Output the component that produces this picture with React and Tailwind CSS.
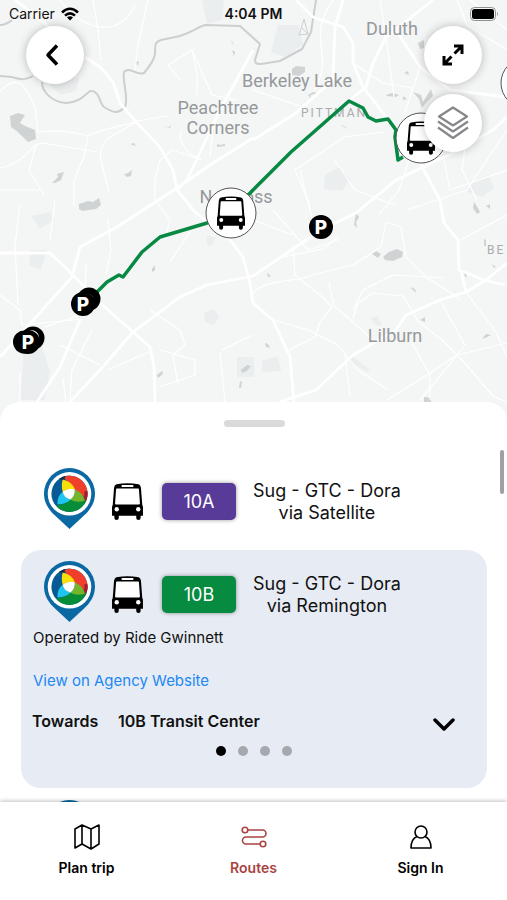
const WATER = [
    'M10 116l8-3 7 2-5 8 5 3 10 4 1 9-8 3-10-10-7-5z',
    'M52 183l6-6-1-3 7-2-3 8-6 3z',
    'M124 174l4-1 4-3-1 6-4 1z',
    'M130 144l4-1 2 3z',
    'M164 126l4 2 3-3-1 3-5-1z',
    'M217 144l3 1 5-1v2l-8 1z',
    'M231 39l1 4 2 3M232 50l2 6 1-4z',
    'M135 61l4 1-1 4z',
    'M79 204l9-3 5 1 6-4 2 7-5 4-14 2-3-2z',
    'M152 269l3-4v5l-3 2z',
    'M157 375l5-4 1 3-5 4z',
    'M241 370l6-5 4 1-4 5-5 2zM239 388l1-7 2 1-1 6z',
    'M292 69l4-3 9 1v5l-6 4-7-1z',
    'M308 95l5-3 4 1-6 2-1 3z',
    'M340 125l4 1 4 3-2-1z',
    'M386 95l6-2 7 2-3 2-9-1zM403 96l4 3-4 1z',
    'M413 92l8 3 2 7 8-13 2 7-6 6-5 6-3-9z',
    'M404 73l4-2 1 4z',
    'M418 43l6-3v8l-4 1z',
    'M355 219l1-6 3 4-3 5 1 6-3-3z',
    'M372 254l4-3 5 3-3 4zM383 257l6-5 8-3 6 3-1 5-9 4-8-1z',
    'M474 202l4 6 2 4-3 2-4-6zM486 206l4-2v5z',
    'M484 239l2 1v6h-2zM492 264l4 3-2 1z',
    'M410 287l5 2 1 4z',
    'M420 320l5-3v5zM482 339l4-5 5 1-4 2z',
    'M461 273l6-1-1 6-2-4z',
    'M265 343l3 1 2 4-4-1zM267 273l4 3-3 1z',
    'M424 397l7 1v4h-7z',
];

const PARKS = [
    'M31 250h16l-6 20-12-5z',
    'M202 0h22l-2 20-15 4z',
    'M278 25h20l5 20-18 12-14-5z',
    'M24 347h18l8 25-6 28H20z',
    'M237 357h17v20h-17z',
    'M204 313l10-4 5 8-6 8-8-3z',
    'M262 361l16-5 3 15-19 1z',
    'M352 356l18 14-3 2-18-11z',
    'M370 318l8-2 4 9-5 1z',
    'M325 175l15-8 10 12-8 12-18-2z',
    'M470 182l18-7 6 13-12 9-14-5z',
    'M207 235l9 3-5 8-4-1z',
    'M45 80l15 15 16-4 3-13z',
    'M31 216l20-4 3 8-14 9z',
];

const MAIN_ROADS = [
    'M85 57l15 10 13 15 7 21 17 20 23 24 13 23 4 20 18 22 35 28 13 17 7 26 3 20 20 17 17 37 4 46',
    'M70 402l30-32 33-38 47-35 27-12 46-9 37-25 31-21 35-17 40-33 57-27 40-23 14-13',
    'M253 50l-33 60-33 70-10 10',
    'M253 138l-40 25-36 25-20 13-40 26-37 20-8 30-72 80',
    'M0 253h50l20 19 30 31 33 29 17 15 4 20 1 35',
    'M80 320l-20 47-23 35',
    'M296 0l17 17 30 10 10 16v20l10 24 23 30 15 20 19 26 20 37 4 23 14 17 1 30 25 10 21 5',
    'M343 0l-8 27-2 53-37 33-43 27',
    'M433 0l-47 37-13 26-7 24-16 13',
    'M461 270l5 22M507 263l-21 17-20 12-26 8-34 15-10 15-43 25-37 35-36 12',
    'M386 25l10 5 24 37 30 23 57 7',
    'M15 0l20 15 40 35',
];

const MINOR_ROADS = [
    'M93 0l5 30 3 30M148 0l-10 45-3 25M60 0c20 30 60 40 75 5',
    'M0 92c20-25 30 5 35 15l3 25c20-3 35 0 50 4l-4 20-10 25 0 25',
    'M0 168c30-5 30-30 48-24l50 8M36 145l-7 25 15 25M0 190h40',
    'M88 136c20-10 40-10 49-15l30-5M137 121c-20 15-40 15-36 40l8 30',
    'M155 200v-20l5-20 12-10 30 10M180 80l-12-15 24-15 20 45 25 5',
    'M192 50l5 25 0 20M182 130c-5 10 5 25 15 27M210 157l3-30 5-15',
    'M0 295l20 15 2 15 60-6M20 205l-5 40 3 60M86 263l-1 35M55 200l-5 40',
    'M108 220l3 30-5 25M155 200l15 20-5 20M170 262l20-30',
    'M110 285l30-30M150 310l30 20 5 15-12 10 5 30',
    'M153 350l-45 20M63 378l3 25M160 350l35 10v15l-35 12M222 350l30-15M220 352l5 50',
    'M60 345l40 20M92 330l-20 40-2 30M45 327l35-12M20 372v30',
    'M253 293c15-15 40-10 60-18l40-10 28-18 5-25 15 5 5 30 20 20 34 22',
    'M293 245l2 30 25 20 12 12-12 15-5 15-30 15M329 282l5 24 18 15 18 17',
    'M273 320l35 10 30 15 20 25 30 20M345 355l5 40M353 310l10-20 30-15 50 3',
    'M353 318l5-15 15-10 30 3 15 25 25 20 20 20 30 35 22 10',
    'M507 343l-50 12-30 20-40 25M440 300l25 45-20 25-25 30M466 292l30 40 11 25',
    'M460 240l47-25M410 340l20 35 0 25',
    'M310 205l-15-35 50-33 40-5M335 160l20 30 40 15M273 210l35 40 30-10',
    'M409 160l-10 30-20 25M440 140l10 50 57-20M470 110l-8 60 15 30',
    'M253 90l50 17 30-27M353 63l30 20 30 5M420 67l-15 45M470 0l37 30',
    'M380 0l6 37 8 60M315 90c20-40-10-50 18-90M507 130l-40 60-60 20',
    'M253 220l40 15M300 170l15 60M283 257l40-8 15-12M507 50l-40-25-10-25',
];

function MapCanvas() {
    return (
        <svg
            className="absolute inset-0 h-full w-full"
            viewBox="0 0 507 423"
            preserveAspectRatio="xMidYMin slice"
            role="img"
            aria-label="Route map"
        >
            <rect width="507" height="423" fill="#f4f5f5" />
            <g fill="#ebeeef">
                {PARKS.map((d) => <path key={d} d={d} />)}
            </g>
            <g fill="#cfd3d4">
                {WATER.map((d) => <path key={d} d={d} />)}
            </g>
            {/* Chattahoochee river */}
            <g fill="none" stroke="#cbcfd0" strokeWidth="2" strokeLinejoin="round">
                <path d="M0 25q6 0 12-5M0 76l12 1c10 3 14 3 21-1M42 82c0 10 10 20 24 21 14-1 19-8 24-12 10-1 9 12 14 16 8 5 13 8 21 0 4-9-3-27-1-35 6-6 12 4 20 1 6-7 10-13 11-19 0-10 0-12 6-14l19-4c12-4 18-9 25-11l35 1 20 18-5 16c0 4 3 4 6 4l19-3 22-12 9-17L316 0" />
                <path d="M299 35l5-16 4 15zM302 28l6 6" strokeWidth="1" />
            </g>
            <g fill="none" stroke="#fff" strokeLinejoin="round">
                <g strokeWidth="1.2">
                    {MINOR_ROADS.map((d) => <path key={d} d={d} />)}
                </g>
                <g strokeWidth="2.8">
                    {MAIN_ROADS.map((d) => <path key={d} d={d} />)}
                </g>
            </g>

            <g fill="#96999b" fontFamily="Roboto, sans-serif" fontSize="18" textAnchor="middle">
                <text x="392" y="35">Duluth</text>
                <text x="297" y="87">Berkeley Lake</text>
                <text x="218" y="114">Peachtree</text>
                <text x="218" y="134">Corners</text>
                <text x="236" y="203">Norcross</text>
                <text x="395" y="342">Lilburn</text>
            </g>
            <g fill="#a9acae" fontFamily="Roboto, sans-serif" fontSize="12" letterSpacing="2">
                <text x="301" y="117">PITTMAN</text>
                <text x="487" y="254">BE</text>
            </g>

            <path
                d="M97 292l10-10 12-7 4 2 19-25 18-15 47-14 24-10 22-23 38-38 58-51 14 7 5 9 8 4 12-2 8 11-1 7 3 23 5-3"
                fill="none"
                stroke="#078943"
                strokeWidth="3.5"
                strokeLinejoin="round"
            />

            <StopMarker x={231} y={213} />
            <StopMarker x={421} y={138} />
            <StopMarker x={526} y={83} />
            <circle cx="89" cy="299" r="11.5" />
            <path d="M88 295q4-1 5 3" stroke="#555" fill="none" />
            <ParkingMarker x={83} y={304} />
            <circle cx="33" cy="338" r="11.5" />
            <path d="M28 332q9-2 10 6" stroke="#fff" strokeWidth="2.5" fill="none" />
            <circle cx="24.500" cy="342" r="11.5" />
            <ParkingMarker x={28} y={342} />
            <ParkingMarker x={321} y={227} />
        </svg>
    );
}

function StopMarker({ x, y }) {
    return (
        <g transform={`translate(${x} ${y})`}>
            <circle r="25" fill="#fff" stroke="#555" />
            <svg x="-14" y="-17" width="28" height="34" viewBox="0 0 92 110">
                <BusShape />
            </svg>
        </g>
    );
}

function ParkingMarker({ x, y }) {
    return (
        <g transform={`translate(${x} ${y})`}>
            <circle r="12" />
            <text y="7" fill="#fff" fontFamily="Inter, sans-serif" fontWeight="800" fontSize="19" textAnchor="middle">P</text>
        </g>
    );
}

function BusShape() {
    return (
        <>
            <path d="M13 4Q46-3 79 4Q85 6 86 14L90 66Q92 68 92 72V97H85V104Q85 110 78.500 110Q72 110 72 104V97H20V104Q20 110 13.500 110Q7 110 7 104V97H0V72Q0 68 2 66L6 14Q7 6 13 4Z" />
            <path d="M14 16H78Q80 16 80 19L83 61Q83 64 80 64H12Q9 64 9 61L12 19Q12 16 14 16Z" fill="#fff" />
            <rect x="28" y="6" width="36" height="6" rx="3" fill="#fff" />
            <circle cx="14" cy="78" r="6.500" fill="#fff" />
            <circle cx="78" cy="78" r="6.500" fill="#fff" />
        </>
    );
}

function BusIcon() {
    return (
        <svg className="h-[37px] w-[31px] shrink-0" viewBox="0 0 92 110" aria-hidden="true">
            <BusShape />
        </svg>
    );
}

function AgencyLogo() {
    return (
        <svg className="mb-1.5 h-[61px] w-[51px] shrink-0" viewBox="0 0 152 182" aria-hidden="true">
            <path d="M76 0a76 76 0 0 1 76 76c0 30-16 50-32 65L76 182 32 141C16 126 0 106 0 76A76 76 0 0 1 76 0z" fill="#0a68a3" />
            <circle cx="76" cy="77" r="65" fill="#fff" />
            <circle cx="76" cy="77" r="54" fill="#075a94" />
            <path d="M44 33Q58 22 76 23L84 25 66 32 55 36z" fill="#112b49" />
            <path d="M62 27Q68 23 76 23A54 54 0 0 1 130 77Q130 84 127 92L91 66 62 32z" fill="#f0402b" />
            <path d="M129 68Q133 88 121 107L113 100Q123 86 120 70z" fill="#a51d2b" />
            <path d="M39 110Q62 110 80 93 104 104 127 95A54 54 0 0 1 39 116z" fill="#078d38" />
            <path d="M56 34Q84 40 93 65 73 58 56 72 50 50 56 34z" fill="#f7df08" />
            <path d="M93 64Q116 74 122 97 100 106 78 94 92 82 93 64z" fill="#73b52b" />
            <path d="M40 108Q38 84 57 70 58 88 80 94 62 110 40 108z" fill="#20c5ee" />
            <path d="M56 71Q73 57 92 64 93 82 79 94 58 89 56 71z" fill="#fff" />
        </svg>
    );
}

function RouteRow({ code, via, color }) {
    return (
        <button type="button" className="flex w-full items-center pl-[23px]">
            <AgencyLogo />
            <span className="ml-[17px]"><BusIcon /></span>
            <span className={`ml-[19px] flex h-[37px] w-[74px] items-center justify-center rounded-[5px] text-lg text-white shadow-[0_0_4px_rgba(0,0,0,0.4)] ${color}`}>
                {code}
            </span>
            <span className="ml-[17px] text-center text-lg leading-[22px]">
                Sug - GTC - Dora
                <br />
                via {via}
            </span>
        </button>
    );
}

function StatusBar() {
    return (
        <div className="relative grid grid-cols-3 items-center px-[9px] pt-1 text-sm leading-5">
            <div className="flex items-center gap-1.5">
                Carrier
                <svg className="h-[14px] w-[18px]" viewBox="0 0 18 14" fill="none" stroke="#000" strokeWidth="2.6" aria-hidden="true">
                    <path d="M1 5.500Q9-2 17 5.500M4 8.600Q9 4 14 8.600" />
                    <path d="M9 13.500L6 10.600Q9 8 12 10.600z" fill="#000" stroke="none" />
                </svg>
            </div>
            <div className="text-center font-semibold">4:04 PM</div>
            <svg className="h-[14px] w-[28px] justify-self-end" viewBox="0 0 28 14" aria-hidden="true">
                <rect x="0.500" y="0.500" width="25" height="13" rx="4" fill="none" stroke="#8d8f90" />
                <rect x="2" y="2" width="22" height="10" rx="2.500" />
                <path d="M27 5q2 2 0 4z" fill="#8d8f90" />
            </svg>
        </div>
    );
}

function RoundButton({ label, children }) {
    return (
        <button
            type="button"
            aria-label={label}
            className="flex size-[58px] items-center justify-center rounded-full bg-white shadow-[0_0_10px_rgba(0,0,0,0.25)]"
        >
            {children}
        </button>
    );
}

function NavItem({ label, active, children }) {
    return (
        <a href="#" className={`flex flex-col items-center gap-2 text-sm leading-5 font-semibold ${active ? 'text-[#a94442]' : 'text-black'}`}>
            <svg className="size-[26px]" viewBox="0 0 26 26" fill="none" stroke="currentColor" strokeWidth="1.600" strokeLinejoin="round" aria-hidden="true">
                {children}
            </svg>
            {label}
        </a>
    );
}

export default function App() {
    return (
        <div className="flex h-screen flex-col overflow-hidden bg-white font-['Inter',sans-serif] text-[#111]">
            {/* Map */}
            <header className="relative h-[47vh] shrink-0">
                <MapCanvas />
                <StatusBar />
                <div className="absolute top-[26px] left-[26px]">
                    <RoundButton label="Back">
                        <svg className="mr-1.5 h-[22px] w-[14px]" viewBox="0 0 14 22" fill="none" stroke="#000" strokeWidth="3.500" strokeLinejoin="round" aria-hidden="true">
                            <path d="M12 1.500L3 11l9 9.500" />
                        </svg>
                    </RoundButton>
                </div>
                <div className="absolute top-[26px] right-[25px] flex flex-col gap-[10px]">
                    <RoundButton label="Full screen">
                        <svg className="size-[22px]" viewBox="0 0 22 22" fill="none" stroke="#000" strokeWidth="3" aria-hidden="true">
                            <path d="M12 2H20v8M20 2l-7.500 7.500M10 20H2v-8M2 20l7.500-7.500" />
                        </svg>
                    </RoundButton>
                    <RoundButton label="Map layers">
                        <svg className="h-[34px] w-[32px]" viewBox="0 0 32 34" fill="none" stroke="#85878a" strokeWidth="2.200" strokeLinejoin="round" aria-hidden="true">
                            <path d="M16 1.500L30 10.500 16 19.500 2 10.500z" />
                            <path d="M1 15.500L16 25.500 31 15.500M1 21.500L16 32 31 21.500" />
                        </svg>
                    </RoundButton>
                </div>
            </header>

            {/* Route list */}
            <main className="relative -mt-[21px] min-h-0 flex-1 overflow-hidden rounded-t-[20px] bg-white pr-5 pl-[21px]">
                <div className="mx-auto mt-[18px] h-[7px] w-[61px] rounded-full bg-[#dadada]" />
                <div className="absolute top-12 right-[3px] h-11 w-1 rounded-full bg-[#a0a0a0]" />
                <div className="mt-[41px]">
                    <RouteRow code="10A" via="Satellite" color="bg-[#583b99]" />
                </div>

                <section className="mt-[15px] rounded-[20px] bg-[#e7ecf4] pt-[11px] pb-8">
                    <RouteRow code="10B" via="Remington" color="bg-[#078b40]" />
                    <div className="px-3 text-[15px] leading-5">
                        <p>Operated by Ride Gwinnett</p>
                        <a href="#" className="mt-[23px] block text-[#2187f5]">View on Agency Website</a>
                        <div className="relative mt-5 -ml-px flex items-center text-base leading-5 font-semibold">
                            <label htmlFor="direction" className="w-[86px]">Towards</label>
                            <select id="direction" className="flex-1 appearance-none bg-transparent">
                                <option>10B Transit Center</option>
                            </select>
                            <svg className="pointer-events-none absolute right-5 bottom-0 h-[13px] w-[22px]" viewBox="0 0 22 13" fill="none" stroke="#000" strokeWidth="3.500" strokeLinecap="round" strokeLinejoin="round" aria-hidden="true">
                                <path d="M2 2l9 9 9-9" />
                            </svg>
                        </div>
                    </div>
                    <div className="mt-[15px] flex justify-center gap-3">
                        <button type="button" aria-label="Page 1" className="size-[10px] rounded-full bg-black" />
                        <button type="button" aria-label="Page 2" className="size-[10px] rounded-full bg-[#a5a9ad]" />
                        <button type="button" aria-label="Page 3" className="size-[10px] rounded-full bg-[#a5a9ad]" />
                        <button type="button" aria-label="Page 4" className="size-[10px] rounded-full bg-[#a5a9ad]" />
                    </div>
                </section>

                <div className="mt-3 pl-[23px]">
                    <AgencyLogo />
                </div>
            </main>

            {/* Tab bar */}
            <nav className="relative grid shrink-0 grid-cols-3 bg-white px-[3px] pt-[22px] pb-[22px] shadow-[0_-1px_4px_rgba(0,0,0,0.25)]">
                <NavItem label="Plan trip">
                    <path d="M1 5l7-4 9 4 8-4v19l-8 5-9-5-7 4zM8 1v19M17 5v20" />
                </NavItem>
                <NavItem label="Routes" active>
                    <circle cx="4" cy="6" r="2.800" />
                    <circle cx="22" cy="20" r="2.800" />
                    <path d="M7 6h14.500a3.500 3.500 0 0 1 0 7H5a3.500 3.500 0 0 0 0 7h14" />
                </NavItem>
                <NavItem label="Sign In">
                    <circle cx="13" cy="8" r="6" />
                    <path d="M9 12.500Q3 15 3 24H23Q23 15 17 12.500" />
                </NavItem>
            </nav>
        </div>
    );
}
